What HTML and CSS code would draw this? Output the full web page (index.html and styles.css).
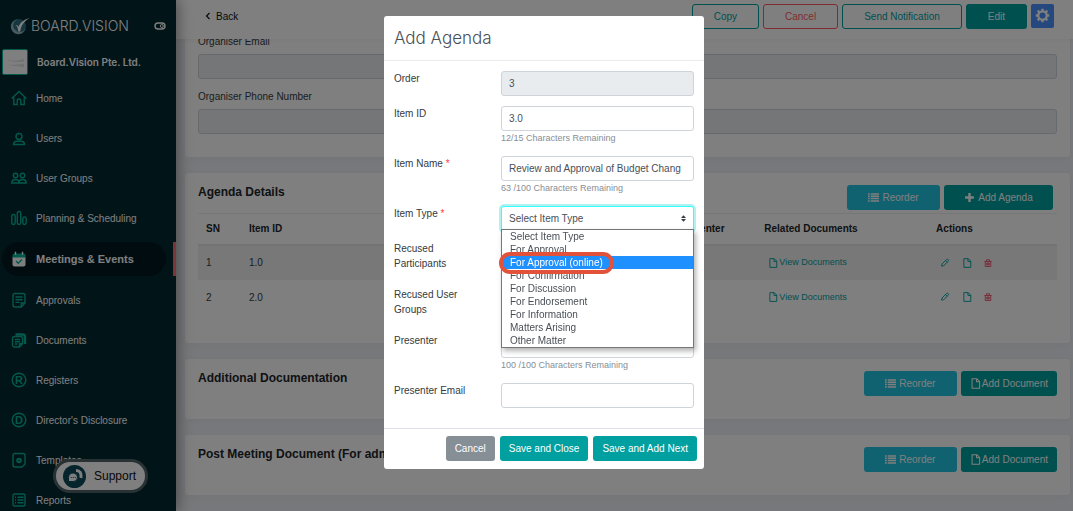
FILE: index.html
```html
<!DOCTYPE html>
<html lang="en">
<head>
    <meta charset="UTF-8">
    <meta name="viewport" content="width=device-width, initial-scale=1.0">
    <title>Board.Vision - Add Agenda</title>

    <link rel="stylesheet" href="styles.css">

</head>
<body>
    <!-- shared icons -->
    <svg class="sprite" aria-hidden="true">
        <symbol id="file" viewBox="0 0 16 16">
            <path d="M3 1h7l4 4v10H3zM9.500 1v4.500H14" fill="none" stroke="currentColor" stroke-width="1.500"/>
        </symbol>
        <symbol id="list" viewBox="0 0 16 16">
            <path d="M0 3h2.500M0 6.300h2.500M0 9.600h2.500M0 13h2.500M4 3h12M4 6.300h12M4 9.600h12M4 13h12" fill="none" stroke="currentColor" stroke-width="2.200"/>
        </symbol>
        <symbol id="pencil" viewBox="0 0 16 16">
            <path d="M2.500 13l.8-3.500 7-7a1.900 1.900 0 0 1 2.800 2.800L6 12.200zM9 4l2.700 2.700" fill="none" stroke="currentColor" stroke-width="1.500" stroke-linejoin="round"/>
        </symbol>
        <symbol id="trash" viewBox="0 0 16 16">
            <path d="M.8 5h14.400M2.500 5v10h11V5M5 4.500V1.500h6v3M5.500 8h5v4h-5zM8 8v4" fill="none" stroke="currentColor" stroke-width="1.800"/>
        </symbol>
    </svg>

    <div class="app">
        <aside class="sidebar">
            <div class="brand">
                <svg class="brand-mark" viewBox="0 0 20 18">
                    <circle cx="8.500" cy="9.500" r="7.500" fill="#2f6f80"/>
                    <path d="M8 2.200a7.500 7.500 0 1 0 7.800 8.500A6.500 6.500 0 1 1 8 2.200z" fill="#8fb6c0"/>
                    <path d="M5.500 8c1.800-.2 2.500.5 3 2C10 6 13.500 2.500 19.500 1 14.500 4 11 8 10.200 14.500H8.200C8 11.500 7.500 9.200 5.500 8z" fill="#ffffff"/>
                </svg>
                <span class="brand-name">BOARD.VISION</span>
                <button class="toggle" aria-label="Toggle menu">
                    <svg viewBox="0 0 12 8"><rect x="1" y="1" width="10" height="6" rx="3" fill="none" stroke="#fff" stroke-width="1.400"/><circle cx="7.800" cy="4" r="1.500" fill="none" stroke="#fff"/></svg>
                </button>
            </div>
            <div class="company">
                <svg class="company-logo" viewBox="0 0 25 25">
                    <path d="M4 10c6 2 12 1 18-1v3c-6 1-12 1-18-2zM4 15c6 1 12 0 18-1v4c-6-2-12-1-18-3z" fill="#e4e4e4"/>
                </svg>
                <span>Board.Vision Pte. Ltd.</span>
            </div>
            <nav class="menu">
                <a href="#"><svg viewBox="0 0 16 16"><path d="M.700 8.500L8 1.500l7.300 7M2.800 7.500v7h3.400v-3.700a1.800 1.800 0 0 1 3.600 0v3.700h3.400v-7"/></svg>Home</a>
                <a href="#"><svg viewBox="0 0 16 16"><circle cx="8" cy="6.500" r="3"/><path d="M2.500 14.500c0-2.200 1.500-3.200 3.500-3.200h4c2 0 3.500 1 3.500 3.200z"/></svg>Users</a>
                <a href="#"><svg viewBox="0 0 16 16"><circle cx="4.500" cy="5.500" r="2.200"/><circle cx="11.500" cy="5.500" r="2.200"/><path d="M.800 13c0-2.500 1.300-3.500 3.700-3.500S8 10.500 8 13zM8 13c0-2.500 1.200-3.500 3.500-3.500s3.700 1 3.700 3.500z"/></svg>User Groups</a>
                <a href="#"><svg viewBox="0 0 16 16"><rect x=".8" y="4.500" width="3.400" height="10" rx="1.700"/><rect x="6.300" y="1.500" width="3.400" height="13" rx="1.700"/><rect x="11.800" y="7" width="3.400" height="7.500" rx="1.700"/></svg>Planning &amp; Scheduling</a>
                <a href="#" class="active"><svg viewBox="0 0 16 16"><path class="solid-white" d="M1.500 6h13v7.500a2 2 0 0 1-2 2h-9a2 2 0 0 1-2-2z"/><path class="solid" d="M1.500 6.500V4.500a2 2 0 0 1 2-2h9a2 2 0 0 1 2 2v2z"/><path class="white" d="M4.500 .800v3M11.500 .800v3"/><path d="M5 10l2.200 2.200L11 8.500"/></svg>Meetings &amp; Events</a>
                <a href="#"><svg viewBox="0 0 16 16"><path d="M4 1.500h8a2 2 0 0 1 2 2V11l-3.700 4H4a2 2 0 0 1-2-2V3.500a2 2 0 0 1 2-2zM14 11h-3.700v4M4.500 5h7M4.500 7.700h7M4.500 10.400h4"/></svg>Approvals</a>
                <a href="#"><svg viewBox="0 0 16 16"><path d="M3.500 4.500h6a2 2 0 0 1 2 2v5.300L8.500 15H3.500a2 2 0 0 1-2-2V6.500a2 2 0 0 1 2-2zM11.500 11.800h-3V15M3.800 7.500h5.400M3.800 9.700h5.400M3.800 12h2.500"/><path d="M4.500 2.500h7a2.500 2.500 0 0 1 2.500 2.500v7" stroke-width="2.400"/></svg>Documents</a>
                <a href="#"><svg viewBox="0 0 16 16"><circle cx="8" cy="8" r="6.800"/><text x="8" y="12">R</text></svg>Registers</a>
                <a href="#"><svg viewBox="0 0 16 16"><circle cx="8" cy="8" r="6.800"/><text x="8" y="12">D</text></svg>Director's Disclosure</a>
                <a href="#"><svg viewBox="0 0 16 16"><path d="M4 1.500h8a2 2 0 0 1 2 2V12l-3 3H4a2 2 0 0 1-2-2V3.500a2 2 0 0 1 2-2z"/><circle cx="8" cy="8.500" r="1.800" stroke-width="2"/></svg>Templates</a>
                <a href="#"><svg viewBox="0 0 16 16"><rect x="2" y="2" width="12" height="12" rx="1.500"/><path d="M4 5.200h1M4 8h1M4 10.800h1M6.500 5.200h6M6.500 8h6M6.500 10.800h6"/></svg>Reports</a>
            </nav>
            <button class="support">
                <span class="support-icon">
                    <svg viewBox="0 0 16 16"><path d="M9 2.500c4 0 5.500 2.500 5 7.500" fill="none" stroke="#fff" stroke-width="3"/><path d="M1.500 13.500V9.500a4.500 4.500 0 0 1 9 0 4 4 0 0 1-4 4z" fill="#fff" stroke="#0a4858"/><path d="M3.700 9.500h1M5.700 9.500h1M7.700 9.500h1" stroke="#0a4858" stroke-width="1.200"/></svg>
                </span>
                Support
            </button>
        </aside>

        <main class="main">
            <header class="topbar">
                <a href="#" class="back"><svg viewBox="0 0 6 8"><path d="M4.500 1L1.500 4l3 3" fill="none" stroke="currentColor" stroke-width="1.200"/></svg>Back</a>
                <div class="actions">
                    <button class="btn btn-wide outline-teal">Copy</button>
                    <button class="btn btn-wide outline-red">Cancel</button>
                    <button class="btn btn-wide outline-teal">Send Notification</button>
                    <button class="btn btn-wide teal">Edit</button>
                    <button class="gear" aria-label="Settings">
                        <svg viewBox="0 0 16 16"><circle cx="8" cy="8" r="4.500" fill="none" stroke="#fff" stroke-width="2.400"/><path d="M8 .8v2.700M8 12.500v2.700M.8 8h2.700M12.500 8h2.700M2.900 2.900l1.900 1.900M11.200 11.200l1.900 1.900M2.900 13.100l1.900-1.900M11.200 4.800l1.900-1.900" stroke="#fff" stroke-width="2.600"/></svg>
                    </button>
                </div>
            </header>

            <div class="content">
                <section class="card organiser">
                    <label for="org-email">Organiser Email</label>
                    <input class="control" id="org-email" type="email" disabled>
                    <label for="org-phone">Organiser Phone Number</label>
                    <input class="control" id="org-phone" type="tel" disabled>
                </section>

                <section class="card agenda">
                    <div class="card-head">
                        <h2>Agenda Details</h2>
                        <div class="actions">
                            <button class="btn btn-reorder blue"><svg><use href="#list"/></svg>Reorder</button>
                            <button class="btn btn-agenda teal"><svg viewBox="0 0 10 10"><path d="M5 1v8M1 5h8" stroke="currentColor" stroke-width="2.200"/></svg>Add Agenda</button>
                        </div>
                    </div>
                    <table>
                        <thead>
                            <tr>
                                <th class="col-sn">SN</th>
                                <th class="col-id">Item ID</th>
                                <th class="col-name">Item Name</th>
                                <th class="col-type">Type</th>
                                <th class="col-presenter">Presenter</th>
                                <th class="col-docs">Related Documents</th>
                                <th class="col-actions">Actions</th>
                            </tr>
                        </thead>
                        <tbody>
                            <tr>
                                <td>1</td>
                                <td>1.0</td>
                                <td></td>
                                <td></td>
                                <td></td>
                                <td><a href="#" class="view"><svg><use href="#file"/></svg>View Documents</a></td>
                                <td>
                                    <div class="row-actions">
                                        <button aria-label="Edit"><svg><use href="#pencil"/></svg></button>
                                        <button aria-label="Document"><svg><use href="#file"/></svg></button>
                                        <button class="delete" aria-label="Delete"><svg><use href="#trash"/></svg></button>
                                    </div>
                                </td>
                            </tr>
                            <tr>
                                <td>2</td>
                                <td>2.0</td>
                                <td></td>
                                <td></td>
                                <td></td>
                                <td><a href="#" class="view"><svg><use href="#file"/></svg>View Documents</a></td>
                                <td>
                                    <div class="row-actions">
                                        <button aria-label="Edit"><svg><use href="#pencil"/></svg></button>
                                        <button aria-label="Document"><svg><use href="#file"/></svg></button>
                                        <button class="delete" aria-label="Delete"><svg><use href="#trash"/></svg></button>
                                    </div>
                                </td>
                            </tr>
                        </tbody>
                    </table>
                </section>

                <section class="card">
                    <div class="card-head">
                        <h2>Additional Documentation</h2>
                        <div class="actions">
                            <button class="btn btn-reorder blue"><svg><use href="#list"/></svg>Reorder</button>
                            <button class="btn btn-doc teal"><svg><use href="#file"/></svg>Add Document</button>
                        </div>
                    </div>
                </section>

                <section class="card">
                    <div class="card-head">
                        <h2>Post Meeting Document (For admin)</h2>
                        <div class="actions">
                            <button class="btn btn-reorder blue"><svg><use href="#list"/></svg>Reorder</button>
                            <button class="btn btn-doc teal"><svg><use href="#file"/></svg>Add Document</button>
                        </div>
                    </div>
                </section>
            </div>
        </main>
    </div>

    <div class="backdrop">
        <form class="modal" role="dialog" aria-labelledby="modal-title">
            <div class="modal-header">
                <h1 id="modal-title">Add Agenda</h1>
            </div>
            <div class="modal-body">
                <div class="field">
                    <label for="order">Order</label>
                    <div><input class="control" id="order" type="text" value="3" disabled></div>
                </div>
                <div class="field">
                    <label for="item-id">Item ID</label>
                    <div>
                        <input class="control" id="item-id" type="text" value="3.0">
                        <small>12/15 Characters Remaining</small>
                    </div>
                </div>
                <div class="field">
                    <label for="item-name">Item Name <span class="required">*</span></label>
                    <div>
                        <input class="control" id="item-name" type="text" value="Review and Approval of Budget Chang">
                        <small>63 /100 Characters Remaining</small>
                    </div>
                </div>
                <div class="field">
                    <label for="item-type">Item Type <span class="required">*</span></label>
                    <div class="select-wrap">
                        <select class="control focused" id="item-type">
                            <option>Select Item Type</option>
                        </select>
                        <svg class="caret" viewBox="0 0 6 8"><path d="M3 0l3 3.300H0zM3 8l3-3.300H0z" fill="#343a40"/></svg>
                        <ul class="dropdown" role="listbox" aria-label="Item Type">
                            <li role="option">Select Item Type</li>
                            <li role="option">For Approval</li>
                            <li role="option" class="selected" aria-selected="true">For Approval (online)</li>
                            <li role="option">For Confirmation</li>
                            <li role="option">For Discussion</li>
                            <li role="option">For Endorsement</li>
                            <li role="option">For Information</li>
                            <li role="option">Matters Arising</li>
                            <li role="option">Other Matter</li>
                        </ul>
                    </div>
                </div>
                <div class="field tall">
                    <label for="recused-participants">Recused Participants</label>
                    <div><input class="control" id="recused-participants" type="text"></div>
                </div>
                <div class="field tall">
                    <label for="recused-groups">Recused User Groups</label>
                    <div><input class="control" id="recused-groups" type="text"></div>
                </div>
                <div class="field">
                    <label for="presenter">Presenter</label>
                    <div>
                        <input class="control" id="presenter" type="text">
                        <small>100 /100 Characters Remaining</small>
                    </div>
                </div>
                <div class="field">
                    <label for="presenter-email">Presenter Email</label>
                    <div><input class="control" id="presenter-email" type="email"></div>
                </div>
            </div>
            <div class="modal-footer">
                <button type="button" class="btn grey">Cancel</button>
                <button type="button" class="btn teal">Save and Close</button>
                <button type="button" class="btn teal">Save and Add Next</button>
            </div>
        </form>
    </div>
</body>
</html>
```
FILE: styles.css
```css
*, *::after {
    box-sizing: border-box;
}

body {
    margin: 0;
    height: 100vh;
    overflow: hidden;
    font-family: "Liberation Sans", Arial, sans-serif;
    font-size: 10px;
    line-height: 15px;
    color: #343a40;
    background-color: #edf1f6;
}

button, input, select {
    font: inherit;
}

button {
    cursor: pointer;
}

a {
    text-decoration: none;
}

.sprite {
    display: none;
}

.app {
    display: flex;
    height: 100vh;
}

/* Sidebar */
.sidebar {
    position: relative;
    z-index: 3;
    flex: 0 0 176px;
    height: 100vh;
    overflow: hidden;
    background-color: #022830;
    color: #fff;
    box-shadow: 2px 0 14px rgba(0, 0, 0, 0.4);
}

.brand {
    display: flex;
    align-items: center;
    height: 49px;
    padding: 2px 10px 0 10px;
}

.brand-mark {
    width: 20px;
    height: 18px;
}

.brand-name {
    flex: 1;
    font-family: Inter, sans-serif;
    font-size: 14px;
    font-weight: 300;
    margin-left: 1px;
}

.toggle {
    display: flex;
    padding: 0;
    border: 0;
    background: none;
}

.toggle svg {
    width: 12px;
    height: 8px;
}

.company {
    display: flex;
    align-items: center;
    gap: 9px;
    padding-left: 2px;
    font-family: Inter, sans-serif;
    font-weight: 600;
}

.company-logo {
    width: 26px;
    height: 26px;
    background-color: #fff;
    border: 1px solid #06b296;
    border-radius: 2px;
}

.menu {
    display: flex;
    flex-direction: column;
    padding-top: 3px;
}

.menu a {
    display: flex;
    align-items: center;
    flex: none;
    gap: 9px;
    height: 40px;
    padding-left: 11px;
    color: #fff;
}

.menu svg {
    width: 16px;
    height: 16px;
    fill: none;
    stroke: #06b296;
    stroke-width: 1.4;
}

.menu text {
    fill: #06b296;
    stroke: none;
    font-size: 11px;
    font-weight: 700;
    text-anchor: middle;
}

.menu .active {
    height: 34px;
    margin: 4px 10px 4px 2px;
    padding-left: 9px;
    border-radius: 17px;
    background-color: #001820;
    font-size: 11px;
    font-weight: 700;
}

.menu .active::after {
    content: "";
    position: absolute;
    right: 0;
    width: 3px;
    height: 34px;
    background-color: #fb6b70;
}

.menu .solid {
    fill: #06b296;
    stroke: none;
}

.menu .solid-white {
    fill: #fff;
    stroke: none;
}

.menu .white {
    stroke: #fff;
}

.support {
    position: absolute;
    left: 53px;
    bottom: 18px;
    display: flex;
    align-items: center;
    gap: 8px;
    height: 34px;
    padding: 0 9px 0 7px;
    border: 3px solid #50646b;
    border-radius: 17px;
    background-color: #fff;
    color: #111;
    font-size: 12px;
}

.support-icon {
    display: flex;
    align-items: center;
    justify-content: center;
    width: 23px;
    height: 23px;
    border-radius: 50%;
    background-color: #0a4858;
}

.support-icon svg {
    width: 16px;
    height: 16px;
}

/* Top bar */
.main {
    flex: 1;
    min-width: 0;
}

.topbar {
    position: relative;
    z-index: 2;
    display: flex;
    justify-content: space-between;
    align-items: center;
    height: 39px;
    padding: 0 19px 7px 29px;
    background-color: #fff;
    box-shadow: 0 1px 6px rgba(0, 0, 0, 0.05);
}

.back {
    display: flex;
    align-items: center;
    gap: 5px;
    color: #111;
}

.back svg {
    width: 6px;
    height: 8px;
}

.actions {
    display: flex;
    gap: 4px;
}

/* Buttons */
.btn {
    display: flex;
    align-items: center;
    justify-content: center;
    gap: 3px;
    height: 25px;
    padding: 0 8px;
    border: 1px solid transparent;
    border-radius: 3px;
    color: #fff;
    white-space: nowrap;
}

.btn svg {
    width: 11px;
    height: 11px;
}

.btn-wide {
    padding: 0 21px;
}

.btn-reorder {
    min-width: 93px;
}

.btn-agenda {
    min-width: 109px;
}

.btn-doc {
    min-width: 96px;
    gap: 1px;
}

.teal {
    background-color: #00a0a0;
}

.blue {
    background-color: #22c4e0;
}

.grey {
    background-color: #868e96;
}

.outline-teal {
    background-color: #fff;
    border-color: #00a0a0;
    color: #00a0a0;
}

.outline-red {
    background-color: #fff;
    border-color: #ff5a60;
    color: #ff5a60;
}

.gear {
    display: flex;
    align-items: center;
    justify-content: center;
    width: 23px;
    height: 24px;
    padding: 0;
    border: 0;
    border-radius: 2px;
    background-color: #4a90ff;
}

.gear svg {
    width: 15px;
    height: 15px;
}

/* Cards */
.content {
    display: flex;
    flex-direction: column;
    gap: 16px;
    margin-top: -16px;
    padding: 0 3px 0 9px;
}

.card {
    padding: 12px 13px 23px;
    border-radius: 3px;
    background-color: #fff;
    box-shadow: 0 2px 8px rgba(0, 0, 0, 0.04);
}

.card-head {
    display: flex;
    justify-content: space-between;
    align-items: flex-start;
}

.card h2 {
    margin: 0;
    font-size: 12px;
    line-height: 15px;
    color: #212529;
}

.organiser label {
    display: block;
    line-height: 14px;
    margin-bottom: 5px;
}

.organiser .control + label {
    margin-top: 11px;
}

.agenda {
    padding-bottom: 28px;
}

.agenda .card-head {
    padding-right: 4px;
    padding-bottom: 3px;
}

.control {
    display: block;
    width: 100%;
    height: 25px;
    padding: 0 7px;
    border: 1px solid #ced4da;
    border-radius: 3px;
    background-color: #fff;
    color: #495057;
}

.control:disabled {
    background-color: #e9ecef;
}

table {
    width: 100%;
    table-layout: fixed;
    border-collapse: collapse;
    border-top: 1px solid #e9ecef;
}

th, td {
    padding: 0 8px;
    text-align: left;
    white-space: nowrap;
    overflow: hidden;
}

th {
    height: 31px;
    border-bottom: 2px solid #e4e7ea;
    color: #212529;
}

td {
    height: 35px;
}

tbody tr:nth-child(odd) {
    background-color: #f1f1f1;
}

.col-sn { width: 5%; }
.col-id { width: 21%; }
.col-name { width: 21%; }
.col-type { width: 8%; }
.col-presenter { width: 10%; }
.col-docs { width: 20%; }
.col-actions { width: 15%; }

.view {
    display: flex;
    align-items: center;
    gap: 1px;
    padding-left: 4px;
    font-size: 9px;
    color: #00a0a0;
}

.view svg {
    width: 10px;
    height: 10px;
}

.row-actions {
    display: flex;
    gap: 12px;
    padding-left: 4px;
}

.row-actions button {
    display: flex;
    padding: 0;
    border: 0;
    background: none;
    color: #00a0a0;
}

.row-actions svg {
    width: 10px;
    height: 10px;
}

.row-actions .delete {
    color: #f0506e;
}

.row-actions .delete svg {
    width: 8px;
}

/* Modal */
.backdrop {
    position: fixed;
    inset: 0;
    z-index: 10;
    display: flex;
    justify-content: center;
    align-items: flex-start;
    padding: 16px 0 0 15px;
    background-color: rgba(0, 0, 0, 0.5);
}

.modal {
    width: 100%;
    max-width: 320px;
    border-radius: 3px;
    background-color: #fff;
}

.modal-header {
    padding: 12px 10px;
    border-bottom: 1px solid #e9ecef;
}

.modal-header h1 {
    margin: 0;
    font-family: Inter, sans-serif;
    font-size: 17px;
    font-weight: 300;
    line-height: 20px;
    color: #495057;
}

.modal-body {
    display: flex;
    flex-direction: column;
    gap: 10px;
    padding: 10px 10px 20px;
}

.field {
    display: grid;
    grid-template-columns: 87px 1fr;
    gap: 20px;
}

.tall {
    min-height: 36px;
}

.field small {
    display: block;
    font-size: 9px;
    line-height: 15px;
    color: #868e96;
}

.required {
    color: #ff3b3b;
}

.select-wrap {
    position: relative;
}

select.control {
    appearance: none;
}

.focused {
    border-color: #3ff;
    box-shadow: 0 0 0 2px rgba(0, 210, 210, 0.3);
}

.caret {
    position: absolute;
    top: 9px;
    right: 8px;
    width: 5px;
    height: 7px;
}

.dropdown {
    position: absolute;
    top: 23px;
    left: 0;
    z-index: 1;
    width: 100%;
    margin: 0;
    padding: 0;
    list-style: none;
    border: 1px solid #767676;
    background-color: #fff;
    box-shadow: 2px 3px 5px rgba(0, 0, 0, 0.3);
}

.dropdown li {
    padding-left: 8px;
    line-height: 13px;
    color: #495057;
}

.dropdown .selected {
    position: relative;
    background-color: #1e90ff;
    color: #fff;
}

/* ring round the chosen option */
.dropdown .selected::after {
    content: "";
    position: absolute;
    top: -4px;
    left: -3px;
    width: 115px;
    height: 22px;
    border: 4px solid #e2513a;
    border-radius: 11px;
}

.modal-footer {
    display: flex;
    justify-content: flex-end;
    gap: 5px;
    padding: 7px 7px 8px;
    border-top: 1px solid #dee2e6;
}
```
